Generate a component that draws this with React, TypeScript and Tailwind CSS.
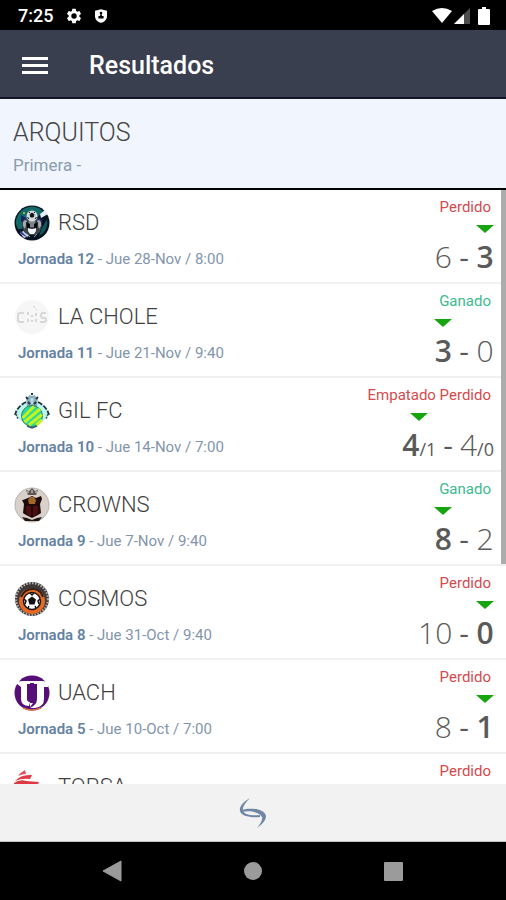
import React from "react";

type Side = {
  goals: string;
  penalties?: string;
};

type Match = {
  team: string;
  logo: React.ReactNode;
  result: "Perdido" | "Ganado" | "Empatado Perdido";
  round?: string;
  date?: string;
  home?: Side;
  away?: Side;
  own?: "home" | "away";
};

const RsdLogo = () => (
  <svg viewBox="0 0 36 36" className="size-9 shrink-0" aria-hidden="true">
    <circle cx="18" cy="18" r="17.5" fill="#07131f" />
    <path d="M2 19A16 16 0 0 1 29 6L24 12 11 14 8 24 4 24Z" fill="#126a68" />
    <path d="M33 14a15 15 0 0 1-8 17l3-8z" fill="#0e5a5e" />
    <path d="M7 10l5 3-1 5-4-1zM25 12l4 3-2 3-3-3z" fill="#16206b" />
    <path d="M26 9l5-4 3 4-7 4z" fill="#e8eef8" />
    <path d="M6 28l5-3 4 6-5 2z" fill="#c9d5ee" />
    <path d="M8 21q0-7 5-8h10q5 1 5 8l-2 6-4 3h-8l-4-3z" fill="#3b444b" />
    <path d="M9 17l2-2 2 1-2 8-2-3zM27 17l-2-2-2 1 2 8 2-3z" fill="#a3abb1" />
    <path d="M15 16h6l1 6h-8z" fill="#7b848b" />
    <path d="M12 17l4 2v5l-3-1zM24 17l-4 2v5l3-1z" fill="#05080c" />
    <circle cx="18" cy="11" r="5.500" fill="#d5dadd" />
    <path d="M16 9.500l2-1.500 2 1.500-.7 2.500h-2.600zM13.500 12l1.500 2M22.500 12l-1.500 2M15 7l1 1M21 7l-1 1" fill="#10151b" stroke="#10151b" />
    <path d="M14 23l3 1h2l3-1v3l-2 3h-4l-2-3z" fill="#f4f6f7" />
    <path d="M13 29l3 3M23 29l-3 3" stroke="#8f989f" strokeWidth="1" />
    <circle cx="10" cy="8" r="1" fill="#d4c22b" />
    <path d="M6 25l8 8-7-4z" fill="#27378f" />
  </svg>
);

const CholeLogo = () => (
  <svg viewBox="0 0 36 36" className="size-9 shrink-0" aria-hidden="true">
    <circle cx="18" cy="18" r="17" fill="#f6f6f6" />
    <g fill="none" stroke="#d8d8d8" strokeWidth="2">
      <path d="M10 14H6a2 2 0 0 0-2 2v5a2 2 0 0 0 2 2h4" />
      <path d="M32 14h-3a2 2 0 0 0-2 2v1a2 2 0 0 0 2 2h1a2 2 0 0 1 0 4h-4" />
      <path d="M14 13v3M14 20v3M18 16v2M18 21v2M22 14v3M22 20v3" />
      <path d="M20 7v2M22 10v1" stroke="#e2e2e2" />
    </g>
  </svg>
);

const GilLogo = () => (
  <svg viewBox="0 0 36 36" className="size-9 shrink-0" aria-hidden="true">
    <path d="M14 9C7 11 1 17 1 22l6 6 11 7 11-7 6-6c0-5-6-11-13-13z" fill="#b9f7ee" />
    <path d="M12 9C6 12 2 17 1 22M24 9c6 3 10 8 11 13" fill="none" stroke="#20313b" strokeWidth="1.800" strokeDasharray="5 1.500" />
    <path d="M2 21l2 5M34 21l-2 5" stroke="#3c5c58" strokeWidth="1.500" strokeDasharray="2 1" />
    <path d="M12 4l2 1 1-3 3 1 3-1 1 3 2-1-1 10H13z" fill="#86a9b8" />
    <path d="M12 4l2 2M17 1h2M22 6l2-2M14 9l2 2M22 9l-2 2" fill="none" stroke="#22323e" strokeWidth="1.800" />
    <path d="M16 5h4l-1 6h-2z" fill="#b5d8e0" />
    <circle cx="18" cy="23" r="10.500" fill="#25dba0" stroke="#3a7d62" />
    <path d="M8.500 25L20 13.500M10.500 29L26 16M15 32L28 21.500M22 32L28 27" stroke="#c8f21c" strokeWidth="3" />
    <path d="M13 33l5 2 5-2" stroke="#3a6172" fill="none" strokeWidth="1.500" />
  </svg>
);

const CrownsLogo = () => (
  <svg viewBox="0 0 36 36" className="size-9 shrink-0" aria-hidden="true">
    <circle cx="18" cy="18" r="17" fill="#d8d0ca" stroke="#bab1ac" />
    <path d="M12 3l3 1 3-3 3 3 3-1-2 5h-8z" fill="#5b5653" />
    <path d="M14 4v2M18 3v3M22 4v2" stroke="#e8e0d8" />
    <path d="M9 13l5-2 4-2 4 2 5-2 1 3-2 5 1 9-3 2-6 3-6-3-3-2 1-9-2-4z" fill="#1d0a0a" />
    <path d="M12 19h5v11c-3-1-5-3-5-5zM19 19h5v6c0 2-2 4-5 5z" fill="#4e0d11" />
    <path d="M14 13l2-3h4l2 3-1 4h-6z" fill="#a2662a" />
    <path d="M8 30l5 1 5 2 5-2 5-1-3 4H11z" fill="#211512" />
  </svg>
);

const CosmosLogo = () => (
  <svg viewBox="0 0 36 36" className="size-9 shrink-0" aria-hidden="true">
    <circle cx="18" cy="18" r="17" fill="#3c3938" />
    <circle cx="18" cy="18" r="16" fill="none" stroke="#b5b2b0" strokeWidth="2.500" strokeDasharray="1.500 1.500" />
    <circle cx="18" cy="20" r="13" fill="#e66a24" />
    <path d="M7 16Q11 7 20 8q7 1 9 8" fill="none" stroke="#30211b" strokeWidth="2" />
    <circle cx="18" cy="20" r="8.500" fill="#fff" stroke="#20130e" strokeWidth="1.500" />
    <path d="M18 15.500l4 3-1.500 5h-5l-1.500-5z" fill="#111" />
    <path d="M16 12l2 2 2-2M26 18l-2 2 1 3M22 27l-1-2M14 27l1-2M10 18l2 2-1 3" stroke="#111" strokeWidth="1.500" fill="none" />
  </svg>
);

const UachLogo = () => (
  <svg viewBox="0 0 36 36" className="size-9 shrink-0" aria-hidden="true">
    <circle cx="18" cy="18" r="17.500" fill="#560f77" />
    <path d="M9 33q9 4 18 0" stroke="#dd7049" fill="none" strokeWidth="1.500" />
    <path d="M2 8q3-2 6-2h8v3h-3v15q0 3 3 3l-1 4Q7 31 7 24V12z" fill="#fff" />
    <path d="M20 6h8q4 0 6 2v4h-4v12q0 8-9 9h-5q7-3 7-9V9h-3z" fill="#fff" />
    <path d="M14 6h8v2h-8z" fill="#fff" />
    <path d="M16 28h3l-3 4z" fill="#fff" />
  </svg>
);

const TorsaLogo = () => (
  <svg viewBox="0 0 36 36" className="size-9 shrink-0" aria-hidden="true">
    <path d="M4 7q3-4 7-6l1 4q-4 0-8 2z" fill="#e5505c" />
    <path d="M1 12q6-7 17-6l-2 4Q8 9 1 12z" fill="#e43b48" />
    <path d="M0 14q6-4 12-2l13 1-2 4H0z" fill="#df3744" />
    <path d="M3 20h25l-5 5H9z" fill="#df3744" />
  </svg>
);

const matches: Match[] = [
  {
    team: "RSD",
    logo: <RsdLogo />,
    round: "Jornada 12",
    date: "Jue 28-Nov / 8:00",
    result: "Perdido",
    home: { goals: "6" },
    away: { goals: "3" },
    own: "away",
  },
  {
    team: "LA CHOLE",
    logo: <CholeLogo />,
    round: "Jornada 11",
    date: "Jue 21-Nov / 9:40",
    result: "Ganado",
    home: { goals: "3" },
    away: { goals: "0" },
    own: "home",
  },
  {
    team: "GIL FC",
    logo: <GilLogo />,
    round: "Jornada 10",
    date: "Jue 14-Nov / 7:00",
    result: "Empatado Perdido",
    home: { goals: "4", penalties: "1" },
    away: { goals: "4", penalties: "0" },
    own: "home",
  },
  {
    team: "CROWNS",
    logo: <CrownsLogo />,
    round: "Jornada 9",
    date: "Jue 7-Nov / 9:40",
    result: "Ganado",
    home: { goals: "8" },
    away: { goals: "2" },
    own: "home",
  },
  {
    team: "COSMOS",
    logo: <CosmosLogo />,
    round: "Jornada 8",
    date: "Jue 31-Oct / 9:40",
    result: "Perdido",
    home: { goals: "10" },
    away: { goals: "0" },
    own: "away",
  },
  {
    team: "UACH",
    logo: <UachLogo />,
    round: "Jornada 5",
    date: "Jue 10-Oct / 7:00",
    result: "Perdido",
    home: { goals: "8" },
    away: { goals: "1" },
    own: "away",
  },
  {
    team: "TORSA",
    logo: <TorsaLogo />,
    result: "Perdido",
  },
];

const resultColor = {
  Perdido: "text-[#d54a4d]",
  Ganado: "text-[#3dba8d]",
  "Empatado Perdido": "text-[#d54a4d]",
};

const ScoreSide = ({ side, own }: { side: Side; own: boolean }) => (
  <div className="flex flex-col items-center">
    <svg viewBox="0 0 18 8" className="h-2 w-[18px]" aria-hidden="true">
      {own && <path d="M0 0h18L9 8z" fill="#17a50f" />}
    </svg>
    <span className={own ? "font-semibold" : "font-light"}>
      {side.goals}
      {side.penalties && (
        <span className="text-lg leading-none font-normal">/{side.penalties}</span>
      )}
    </span>
  </div>
);

const MatchRow = ({ match }: { match: Match }) => (
  <li className="flex h-[94px] shrink-0 justify-between border-b-2 border-[#f0f0f1] pr-3 pl-3.5">
    <div className="pt-[15px]">
      <div className="flex items-center gap-2">
        {match.logo}
        <h2 className="text-[22px] leading-9 font-light text-[#3f3f3f]">{match.team}</h2>
      </div>
      {match.round && (
        <p className="mt-2 pl-1 text-[15px] leading-5 text-[#8395ab]">
          <span className="font-semibold text-[#6482a2]">{match.round}</span> - {match.date}
        </p>
      )}
    </div>
    <div className="flex flex-col items-end pt-[7px]">
      <span className={`pr-[3px] text-[15px] leading-5 ${resultColor[match.result]}`}>
        {match.result}
      </span>
      {match.home && match.away && (
        <div className="mt-2 flex items-end gap-[7px] font-['Open_Sans',sans-serif] text-3xl leading-12 text-[#5a5a5a]">
          <ScoreSide side={match.home} own={match.own === "home"} />
          <span>-</span>
          <ScoreSide side={match.away} own={match.own === "away"} />
        </div>
      )}
    </div>
  </li>
);

const StatusBar = () => (
  <div className="flex h-[30px] shrink-0 items-center bg-black pt-0.5 pr-4 pl-[18px] text-white">
    <span className="text-lg leading-none font-medium">7:25</span>
    <svg viewBox="0 0 24 24" className="ml-3 size-[18px]" fill="currentColor" aria-hidden="true">
      <path d="M19.140 12.940c.04-.3.06-.61.06-.94s-.02-.64-.07-.94l2.030-1.580a.49.49 0 0 0 .12-.61l-1.920-3.320a.49.49 0 0 0-.59-.22l-2.390.96a7 7 0 0 0-1.620-.94l-.36-2.540a.48.48 0 0 0-.48-.41h-3.840a.48.48 0 0 0-.47.41l-.36 2.540a7 7 0 0 0-1.620.94l-2.390-.96a.48.48 0 0 0-.59.22L2.740 8.870a.48.48 0 0 0 .12.610l2.030 1.580a7 7 0 0 0 0 1.880l-2.030 1.580a.49.49 0 0 0-.12.610l1.920 3.320c.12.220.37.290.59.220l2.390-.96c.5.380 1.030.700 1.620.940l.36 2.540c.05.240.24.410.48.410h3.840c.24 0 .44-.17.470-.41l.36-2.540a7 7 0 0 0 1.620-.94l2.390.96c.22.080.47 0 .59-.22l1.920-3.320a.48.48 0 0 0-.12-.61zM12 15.600a3.600 3.600 0 1 1 0-7.200 3.600 3.600 0 0 1 0 7.200z" />
    </svg>
    <svg viewBox="0 0 14 16" className="ml-3 h-3.5 w-3" aria-hidden="true">
      <path d="M7 0l7 2v6c0 4-3 7-7 8-4-1-7-4-7-8V2z" fill="#fff" />
      <circle cx="7" cy="4.500" r="1.500" fill="#000" />
      <path d="M6 6h2v5H6zM4 8h6v3H4z" fill="#000" />
    </svg>
    <div className="ml-auto flex items-center">
      <svg viewBox="0 0 20 16" className="h-4 w-5" aria-hidden="true">
        <path d="M0 3Q10-3 20 3L10 15z" fill="#fff" />
      </svg>
      <svg viewBox="0 0 16 16" className="ml-0.5 size-4" aria-hidden="true">
        <path d="M16 0v16H0z" fill="#4d4d4d" />
        <path d="M10 6v10H0z" fill="#fff" />
      </svg>
      <svg viewBox="0 0 12 18" className="ml-2 h-[18px] w-3" aria-hidden="true">
        <path d="M4 0h4v2h3q1 0 1 1v14q0 1-1 1H1q-1 0-1-1V3q0-1 1-1h3z" fill="#fff" />
      </svg>
    </div>
  </div>
);

const NavBar = () => (
  <nav className="grid h-[58px] shrink-0 grid-cols-3 bg-black px-[42px] text-[#9b9b9b]">
    <button aria-label="Atrás" className="flex items-center justify-center">
      <svg viewBox="0 0 20 22" className="h-[22px] w-5" fill="currentColor">
        <path d="M19 1v20L1 11z" stroke="currentColor" strokeLinejoin="round" />
      </svg>
    </button>
    <button aria-label="Inicio" className="flex items-center justify-center">
      <span className="size-[18px] rounded-full bg-current" />
    </button>
    <button aria-label="Recientes" className="flex items-center justify-center">
      <span className="size-[19px] rounded-[1px] bg-current" />
    </button>
  </nav>
);

export default function App() {
  return (
    <div className="flex h-screen flex-col overflow-hidden bg-white font-[Roboto,sans-serif]">
      <StatusBar />
      <header className="flex h-[69px] shrink-0 items-center gap-[41px] border-b-2 border-[#12132a] bg-[#3a3f4f] px-[22px] pt-1 text-white">
        <button aria-label="Menú" className="flex w-[26px] flex-col gap-1">
          <span className="h-[3px] bg-white" />
          <span className="h-[3px] bg-white" />
          <span className="h-[3px] bg-white" />
        </button>
        <h1 className="text-[25px] leading-8 font-medium">Resultados</h1>
      </header>
      <section className="flex h-[91px] shrink-0 flex-col justify-center gap-1 border-b-2 border-black bg-[#f1f5fd] px-[13px] pt-1.5">
        <p className="text-[25px] leading-8 font-light text-[#444444]">ARQUITOS</p>
        <p className="text-[17px] leading-6 text-[#8b9bb0]">Primera -</p>
      </section>
      <main className="relative min-h-0 flex-1 overflow-hidden">
        <ul className="flex flex-col">
          {matches.map((match) => (
            <MatchRow key={match.team} match={match} />
          ))}
        </ul>
        {/* scroll thumb */}
        <div className="absolute top-0 right-0 h-[63%] w-[5px] bg-[#acacac]" />
      </main>
      <footer className="flex h-[58px] shrink-0 items-center justify-center border-b border-[#c4c4c4] bg-[#f2f2f2]">
        <button aria-label="Actualizar">
          <svg viewBox="0 0 28 30" className="h-[30px] w-7" fill="#6f87a5">
            <path d="M11 0C4 4 0 9 1 13c1 5 10 7 20 6v-2C13 18 6 17 4 13 3 9 7 4 11 0z" />
            <path d="M3 12c8-3 23-1 24 6 0 5-5 9-9 12 3-4 6-8 5-11-2-4-11-7-20-5z" />
          </svg>
        </button>
      </footer>
      <NavBar />
    </div>
  );
}
